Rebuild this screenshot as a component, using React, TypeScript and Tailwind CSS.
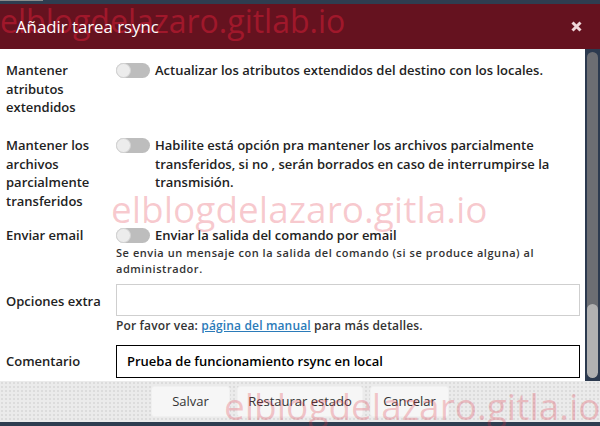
const Toggle = () => (
  <div className="mt-[2px] mr-[5px] h-[15px] w-[34px] shrink-0 rounded-full bg-[#bdbdbd]">
    <div className="h-[15px] w-[15px] rounded-full border border-[#d4d4d4] bg-[#ececec]" />
  </div>
);

const App = () => {
  return (
    <div className="relative flex h-[426px] w-[600px] flex-col overflow-hidden font-['Open_Sans',sans-serif] text-[#222]">
      <div className="h-[4px] bg-[#2e3d50]">
        <div className="h-px w-[43px] bg-[#8c8c8c]" />
      </div>

      <div className="relative flex h-[45px] items-center justify-between bg-[#65121f] pl-4 pr-[18px]">
        <span className="pointer-events-none absolute left-0 top-[1px] text-[32px] leading-none text-[#a0182b]">
          elblogdelazaro.gitlab.io
        </span>
        <span className="relative text-[16.8px] text-white">Añadir tarea rsync</span>
        <svg width="11" height="11" viewBox="0 0 11 11" className="relative">
          <path d="M1.5 1.5L9.5 9.5M9.5 1.5L1.5 9.5" stroke="#efd6d9" strokeWidth="3" />
        </svg>
      </div>

      <div className="flex h-[332px] bg-white">
        <div className="flex-1 pl-[6px] pr-[5px] pt-[12px] text-[13px] font-semibold">
          <div className="flex leading-[18.5px]">
            <div className="w-[110px] shrink-0">Mantener atributos extendidos</div>
            <Toggle />
            <div>Actualizar los atributos extendidos del destino con los locales.</div>
          </div>

          <div className="mt-[19.5px] flex leading-[18.5px]">
            <div className="w-[110px] shrink-0">Mantener los archivos parcialmente transferidos</div>
            <Toggle />
            <div>
              Habilite está opción pra mantener los archivos parcialmente transferidos, si no , serán
              borrados en caso de interrumpirse la transmisión.
            </div>
          </div>

          <div className="mt-[16px] flex leading-[18.5px]">
            <div className="w-[110px] shrink-0">Enviar email</div>
            <div>
              <div className="flex">
                <Toggle />
                <div>Enviar la salida del comando por email</div>
              </div>
              <div className="text-[11px] leading-[16px] tracking-[0.55px] text-[#333]">
                Se envia un mensaje con la salida del comando (si se produce alguna) al administrador.
              </div>
            </div>
          </div>

          <div className="mt-[7.5px] flex items-center">
            <div className="w-[110px] shrink-0 pt-[3px]">Opciones extra</div>
            <div className="h-[32px] flex-1 border border-[#cfcfcf] bg-white" />
          </div>
          <div className="ml-[110px] mt-[2px] text-[12px] leading-[16px] tracking-[0.15px] text-[#333]">
            Por favor vea: <span className="text-[#2b7bb9] underline">página del manual</span> para más
            detalles.
          </div>

          <div className="mt-[11px] flex items-center">
            <div className="w-[110px] shrink-0 pt-[1px]">Comentario</div>
            <div className="flex h-[33px] flex-1 items-center border border-black bg-white px-[10px] text-black">
              Prueba de funcionamiento rsync en local
            </div>
          </div>
        </div>

        <div className="flex w-[15px] flex-col bg-[#2c3a4f] px-[2px] pb-[3px] pt-[3px]">
          <div className="flex flex-1 flex-col justify-end overflow-hidden rounded-full bg-[#6c6e73]">
            <div className="h-[74px] rounded-full bg-[#b1b1b1]" />
          </div>
        </div>
      </div>

      <div className="flex h-[41px] items-center justify-center gap-[7px] bg-[#ebebeb] bg-[radial-gradient(#dcdcdc_1px,transparent_1px)] bg-[size:4px_4px] text-[13px] text-[#333]">
        <button className="h-[31px] w-[79px] rounded-[3px] border border-[#f0f0f0] bg-[#f6f6f6]">Salvar</button>
        <button className="h-[31px] w-[126px] rounded-[3px] border border-[#f0f0f0] bg-[#f6f6f6]">
          Restaurar estado
        </button>
        <button className="h-[31px] w-[79px] rounded-[3px] border border-[#f0f0f0] bg-[#f6f6f6]">
          Cancelar
        </button>
      </div>

      <div className="h-[4px] bg-[#2e3d50]" />

      <span className="pointer-events-none absolute left-[111px] top-[190px] text-[37px] leading-none text-[#e02a3c]/25">
        elblogdelazaro.gitla.io
      </span>
      <span className="pointer-events-none absolute left-[224px] top-[387px] text-[37px] leading-none text-[#e02a3c]/25">
        elblogdelazaro.gitla.io
      </span>
    </div>
  );
};

export default App;
